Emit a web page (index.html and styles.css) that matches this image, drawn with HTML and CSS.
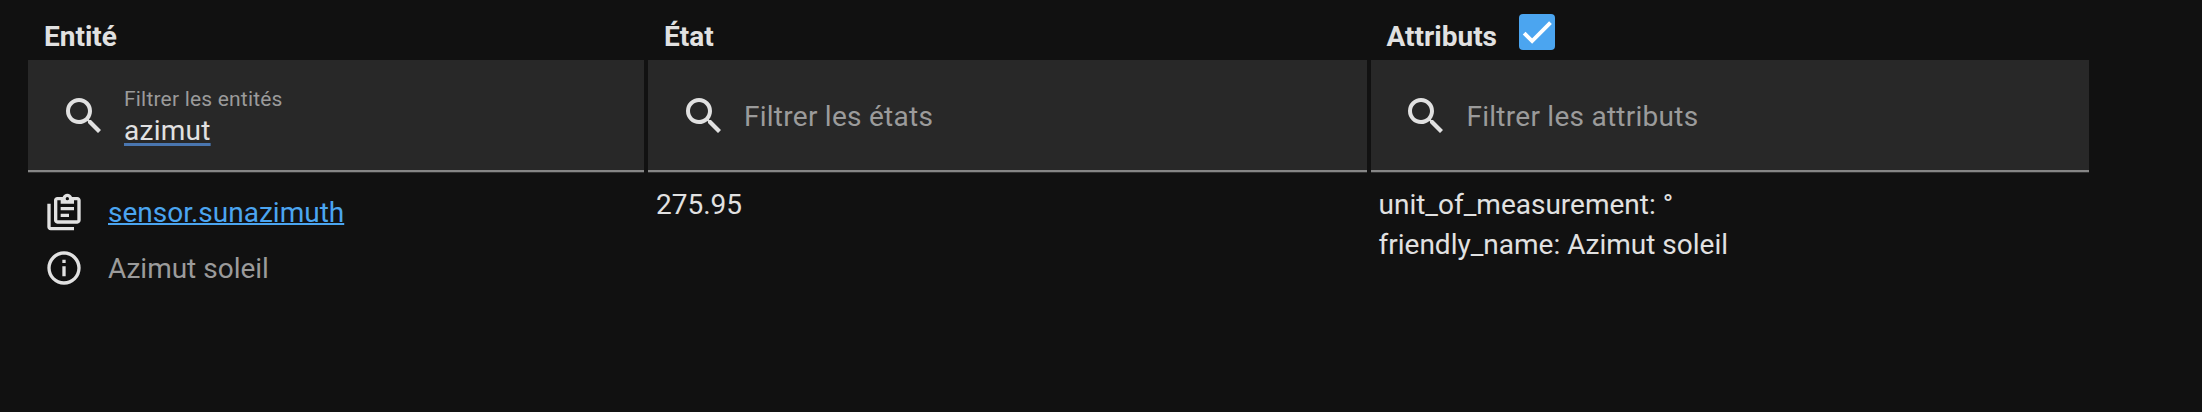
FILE: index.html
```
<!DOCTYPE html>
<html lang="fr">
<head>
  <meta charset="UTF-8">
  <title>États</title>
  <link rel="stylesheet" href="styles.css">
</head>

<body>
  <svg class="defs">
    <symbol id="magnify" viewBox="0 0 24 24">
      <path d="M9.5,3A6.5,6.5 0 0,1 16,9.5C16,11.11 15.41,12.59 14.44,13.73L14.71,14H15.5L20.5,19L19,20.5L14,15.5V14.71L13.73,14.44C12.59,15.41 11.11,16 9.5,16A6.5,6.5 0 0,1 3,9.5A6.5,6.5 0 0,1 9.5,3M9.5,5C7,5 5,7 5,9.5C5,12 7,14 9.5,14C12,14 14,12 14,9.5C14,7 12,5 9.5,5Z"/>
    </symbol>
  </svg>

  <div class="entities">
    <div class="heading">Entité</div>
    <div class="heading">État</div>
    <div class="heading">
      Attributs
      <span class="checkbox">
        <svg viewBox="0 0 24 24"><path d="M1.73,12.91 8.1,19.28 22.79,4.59"/></svg>
      </span>
    </div>

    <div class="filter">
      <svg class="search"><use href="#magnify"/></svg>
      <div class="field">
        <span class="label">Filtrer les entités</span>
        <span class="value">azimut</span>
      </div>
    </div>
    <div class="filter">
      <svg class="search"><use href="#magnify"/></svg>
      <span class="placeholder">Filtrer les états</span>
    </div>
    <div class="filter">
      <svg class="search"><use href="#magnify"/></svg>
      <span class="placeholder">Filtrer les attributs</span>
    </div>

    <div class="entity">
      <div class="id">
        <svg class="icon" viewBox="0 0 24 24"><path fill-rule="evenodd" d="M4,7V21H18V23H4C2.89,23 2,22.1 2,21V7H4M20,3C21.1,3 22,3.9 22,5V17C22,18.1 21.1,19 20,19H8C6.89,19 6,18.1 6,17V5C6,3.9 6.89,3 8,3H11.18C11.6,1.84 12.7,1 14,1C15.3,1 16.4,1.84 16.82,3H20M14,3A1,1 0 0,0 13,4A1,1 0 0,0 14,5A1,1 0 0,0 15,4A1,1 0 0,0 14,3M10,7V5H8V17H20V5H18V7H10M10,9H18V11H10V9M10,13H15V15H10V13Z"/></svg>
        <a href="#">sensor.sunazimuth</a>
      </div>
      <div class="name">
        <svg class="icon" viewBox="0 0 24 24"><path d="M11,9H13V7H11M12,20C7.59,20 4,16.41 4,12C4,7.59 7.59,4 12,4C16.41,4 20,7.59 20,12C20,16.41 16.41,20 12,20M12,2A10,10 0 0,0 2,12A10,10 0 0,0 12,22A10,10 0 0,0 22,12A10,10 0 0,0 12,2M11,17H13V11H11V17Z"/></svg>
        <span>Azimut soleil</span>
      </div>
    </div>
    <div class="cell">275.95</div>
    <div class="cell">unit_of_measurement: °<br>friendly_name: Azimut soleil</div>
  </div>
</body>
</html>
```
FILE: styles.css
```
* { box-sizing: border-box; }

body {
  margin: 0;
  background: #111111;
  color: #e1e1e1;
  font-family: Roboto, sans-serif;
  font-size: 28px;
  line-height: 40px;
}

svg { fill: currentColor; flex: none; }

.defs { display: none; }

.entities {
  display: grid;
  grid-template-columns: 616px 718.5px 718.5px;
  grid-template-rows: 60px 112px auto;
  column-gap: 4px;
  margin-left: 28px;
}

.heading {
  display: flex;
  padding: 17px 0 0 16px;
  font-weight: bold;
}

.checkbox {
  width: 36px;
  height: 36px;
  margin: -3px 0 0 22.5px;
  padding: 3px;
  border-radius: 4px;
  background: #4ba5f0;
}

.checkbox svg {
  display: block;
  fill: none;
  stroke: white;
  stroke-width: 3.12;
}

.filter {
  display: flex;
  align-items: center;
  height: 112px;
  padding-left: 31.9px;
  background: #282828;
  border-bottom: 2px solid #868686;
  box-shadow: 0 1px #333333;
  letter-spacing: 0.009375em;
}

.search {
  width: 48px;
  height: 48px;
  margin: 1px 16.1px 0 0;
}

.field {
  display: flex;
  flex-direction: column;
  align-items: flex-start;
  padding-top: 2px;
}

.label {
  color: #9b9b9b;
  font-size: 21px;
  line-height: 28px;
  letter-spacing: 0.009375em;
}

.value {
  padding-top: 2px;
  line-height: 32px;
  text-decoration: underline 3px #4a76b0;
  text-underline-offset: 3px;
}

.placeholder {
  padding-top: 3px;
  color: #9b9b9b;
}

.entity { padding: 12px 16px; }

.id, .name {
  display: flex;
  align-items: center;
  height: 56px;
}

.id a, .name span { padding-top: 2px; }

.name span { color: #9b9b9b; }

.icon {
  width: 40px;
  height: 40px;
  margin-right: 24px;
}

a {
  color: #4ba5f0;
  text-decoration-thickness: 2px;
}

.cell { padding: 13px 8px; }
```
